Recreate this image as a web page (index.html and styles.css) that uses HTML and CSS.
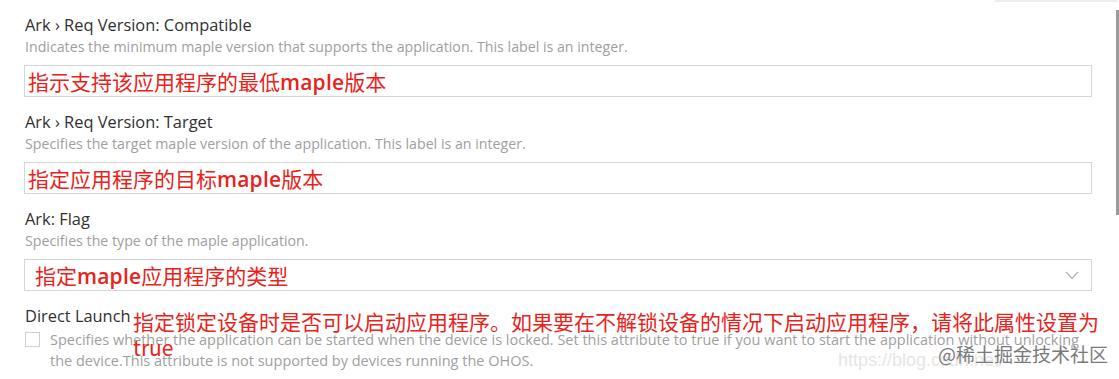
FILE: index.html
```html
<!DOCTYPE html>
<html>
<head>
    <title>settings</title>
    <link rel="stylesheet" href="styles.css">
</head>
<body>
    <div class="top-strip"></div>
    <div class="scroll-thumb"></div>
    <div class="settings">
        <div class="setting">
            <div class="title">Ark › Req Version: Compatible</div>
            <div class="desc">Indicates the minimum maple version that supports the application. This label is an integer.</div>
            <div class="field">
                <span class="note">指示支持该应用程序的最低<b>maple</b>版本</span>
            </div>
        </div>
        <div class="setting">
            <div class="title">Ark › Req Version: Target</div>
            <div class="desc">Specifies the target maple version of the application. This label is an integer.</div>
            <div class="field">
                <span class="note">指定应用程序的目标<b>maple</b>版本</span>
            </div>
        </div>
        <div class="setting">
            <div class="title">Ark: Flag</div>
            <div class="desc">Specifies the type of the maple application.</div>
            <div class="field select">
                <span class="note">指定<b>maple</b>应用程序的类型</span>
                <svg class="chevron" width="14" height="9" viewBox="0 0 14 9">
                    <polyline points="1,1 7,7.5 13,1" fill="none" stroke="#b5b5b5" stroke-width="1.3"/>
                </svg>
            </div>
        </div>
        <div class="setting last">
            <div class="title">Direct Launch</div>
            <span class="note overlay">指定锁定设备时是否可以启动应用程序。如果要在不解锁设备的情况下启动应用程序，请将此属性设置为true</span>
            <div class="check-row">
                <span class="checkbox"></span>
                <div class="desc big">Specifies whether the application can be started when the device is locked. Set this attribute to true if you want to start the application without unlocking the device.This attribute is not supported by devices running the OHOS.</div>
            </div>
        </div>
    </div>
    <div class="watermark">
        <span class="url">https://blog.csdn.net/</span>
        <span class="mark">@稀土掘金技术社区</span>
    </div>
</body>
</html>
```

FILE: styles.css
```css
body {
    margin: 0;
    background: #fff;
    font-family: "Open Sans", "Noto Sans", sans-serif;
    width: 1119px;
    height: 379px;
    overflow: hidden;
    position: relative;
}

.top-strip {
    position: absolute;
    top: 0;
    left: 995px;
    width: 122px;
    height: 2px;
    background: #eeeeee;
}

.scroll-thumb {
    position: absolute;
    top: 10px;
    right: 0;
    width: 3px;
    height: 205px;
    background: #9a9a9a;
}

.settings {
    width: 1068px;
    margin-left: 24px;
    padding-top: 14px;
}

.setting {
    margin-bottom: 14px;
    position: relative;
}

.title {
    font-size: 16.4px;
    line-height: 22px;
    color: #303030;
    padding-left: 1px;
}

.desc {
    font-size: 14.2px;
    line-height: 20px;
    color: #a0a0a0;
    padding-left: 1px;
    margin-top: 1px;
}

.field {
    margin-top: 8px;
    height: 30px;
    border: 1px solid #d6d6d6;
    display: flex;
    align-items: center;
    padding-left: 3px;
}

.field.select {
    padding-left: 10px;
    justify-content: space-between;
    padding-right: 12px;
}

.note {
    font-family: "Noto Sans CJK SC", sans-serif;
    font-size: 21px;
    line-height: 26px;
    color: #e8231b;
}

.note b {
    font-family: "Open Sans", "Noto Sans", sans-serif;
    font-weight: 600;
    letter-spacing: 0.2px;
}

.overlay {
    position: absolute;
    top: 3px;
    left: 109px;
    width: 980px;
    line-height: 26px;
    font-size: 21px;
}

.check-row {
    display: flex;
    align-items: flex-start;
    gap: 10px;
    margin-top: 2px;
    padding-left: 1px;
}

.checkbox {
    flex: none;
    width: 15px;
    height: 15px;
    border: 1px solid #cfcfcf;
    margin-top: 3px;
    box-sizing: border-box;
}

.desc.big {
    font-size: 14.5px;
    line-height: 21px;
    padding-left: 0;
    margin-top: 0;
    width: 1040px;
}

.watermark {
    position: absolute;
    left: 838px;
    top: 340px;
    width: 270px;
    height: 36px;
}

.watermark .url {
    position: absolute;
    left: 0;
    top: 10px;
    font-family: "Liberation Sans", sans-serif;
    font-size: 18px;
    color: #e6e6e6;
}

.watermark .mark {
    position: absolute;
    right: 0;
    top: 0;
    font-family: "Noto Sans CJK SC", sans-serif;
    font-size: 19px;
    color: #7a7a7a;
    text-shadow: 0 0 2px #fff;
}
```
